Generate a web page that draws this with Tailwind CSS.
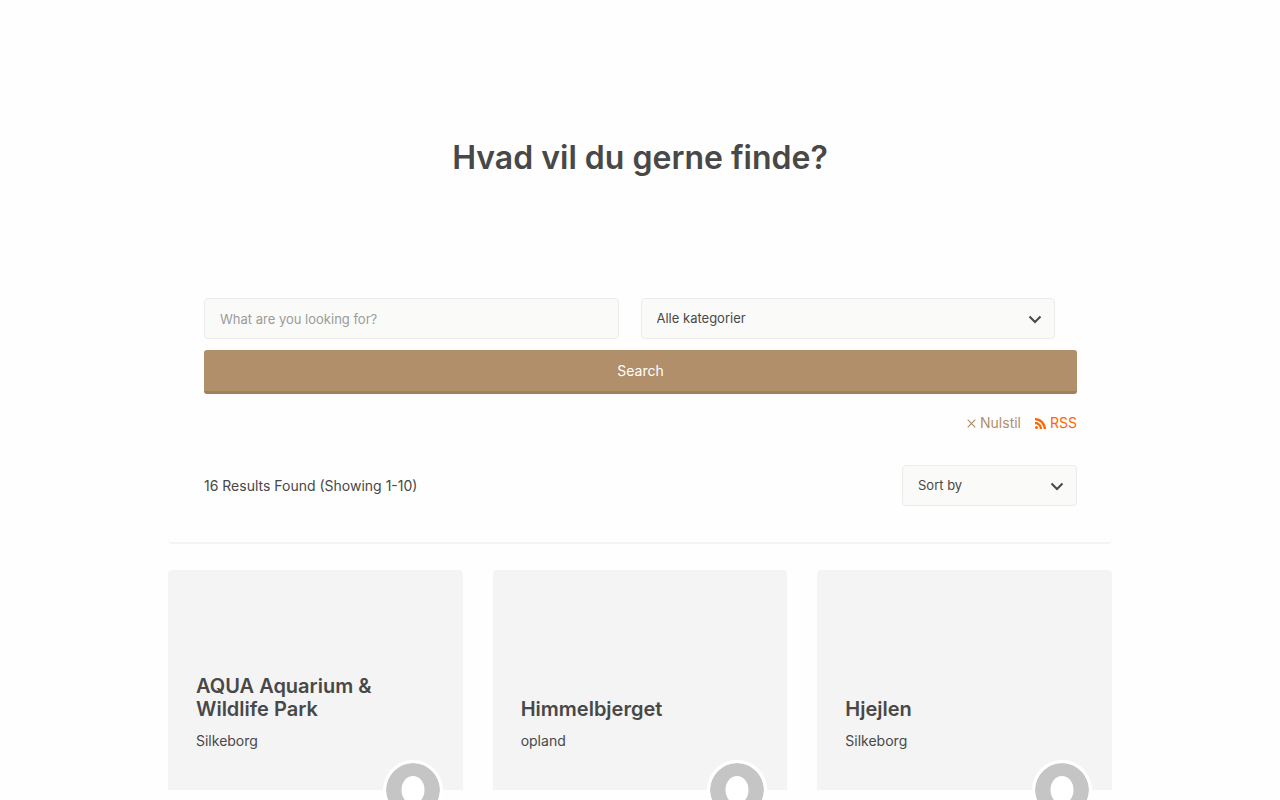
<!DOCTYPE html>
<html lang="da">
<head>
<meta charset="utf-8">
<meta name="viewport" content="width=device-width, initial-scale=1">
<title>Hvad vil du gerne finde?</title>
<script src="https://cdn.jsdelivr.net/npm/@tailwindcss/browser@4"></script>
</head>
<body class="min-h-screen bg-[#fefefe] font-['Inter',sans-serif] text-[#484848]">
<svg class="hidden" aria-hidden="true">
  <symbol id="chevron" viewBox="0 0 14 9"><path d="M1.5 1.500 7 7l5.500-5.500" fill="none" stroke="currentColor" stroke-width="2"/></symbol>
  <symbol id="person" viewBox="0 0 54 54"><circle cx="27" cy="27" r="27" fill="#c5c5c5"/><ellipse cx="27" cy="27" rx="11.500" ry="14" fill="#fff"/><path d="M22 37v5c-4 3-10 3-12 6a27 27 0 0 0 34 0c-2-3-8-3-12-6v-5z" fill="#fff"/></symbol>
</svg>
<main class="mx-auto max-w-[944px]">
  <h1 class="pt-[138px] text-center text-[32px] leading-10 font-semibold">Hvad vil du gerne finde?</h1>
  <section class="mt-[120px] rounded border-b-2 border-[#f4f4f4] pr-[35px] pb-9 pl-9">
    <form onsubmit="return false">
      <div class="grid grid-cols-2">
        <div class="pr-[22px]">
          <input type="text" aria-label="Search keywords" placeholder="What are you looking for?" class="block h-[41px] w-full rounded border border-[#ebebeb] bg-[#fafaf8] px-[15px] text-[13px] placeholder:text-[#9b9b9b]">
        </div>
        <div class="relative mr-[22px]">
          <select aria-label="Kategori" class="block h-[41px] w-full appearance-none rounded border border-[#ebebeb] bg-[#fafaf8] px-[15px] text-[13px]"><option>Alle kategorier</option></select>
          <svg class="pointer-events-none absolute top-[17px] right-[13px] h-[9px] w-[14px]"><use href="#chevron"/></svg>
        </div>
      </div>
      <button type="submit" class="mt-[11px] block h-11 w-full rounded-[3px] border-b-3 border-[#a17f5e] bg-[#b18f6a] pt-px text-sm text-white">Search</button>
    </form>
    <div class="mt-[19px] flex h-5 items-center justify-end gap-[14px] text-[14px] leading-5">
      <a href="#" class="flex items-center gap-1 text-[#b18f6a]">
        <svg class="size-[9px]" viewBox="0 0 9 9" fill="none" stroke="currentColor" stroke-width="1.200"><path d="m.7.7 7.600 7.600M8.300.7.7 8.300"/></svg>Nulstil</a>
      <a href="#" class="flex items-center gap-1 text-[#ff6600]">
        <svg class="size-[11px]" viewBox="0 0 11 11" fill="none" stroke="currentColor" stroke-width="2.300"><circle cx="1.500" cy="9.500" r="1.500" fill="currentColor" stroke="none"/><path d="M0 5a6 6 0 0 1 6 6M0 1.200A9.800 9.800 0 0 1 9.800 11"/></svg>RSS</a>
    </div>
    <div class="mt-8 flex items-center justify-between">
      <p class="text-[14px]">16 Results Found (Showing 1-10)</p>
      <div class="relative w-[175px]">
        <select aria-label="Sort by" class="block h-[41px] w-full appearance-none rounded border border-[#ebebeb] bg-[#fafaf8] px-[15px] text-[13px]"><option>Sort by</option></select>
        <svg class="pointer-events-none absolute top-[17px] right-[13px] h-[9px] w-[14px]"><use href="#chevron"/></svg>
      </div>
    </div>
  </section>
  <section class="mt-[26px] grid grid-cols-3 gap-[30px]">
    <article class="relative flex h-[220px] flex-col justify-end rounded-t bg-[#f4f4f4] px-7 pb-[39px]">
      <h2 class="text-[20px] leading-[23px] font-semibold"><a href="#">AQUA Aquarium &amp;<br>Wildlife Park</a></h2>
      <p class="mt-[10px] text-[14px] leading-5">Silkeborg</p>
      <svg class="absolute right-5 -bottom-[30px] size-[60px] rounded-full border-3 border-white bg-white"><use href="#person"/></svg>
    </article>
    <article class="relative flex h-[220px] flex-col justify-end rounded-t bg-[#f4f4f4] px-7 pb-[39px]">
      <h2 class="text-[20px] leading-[23px] font-semibold"><a href="#">Himmelbjerget</a></h2>
      <p class="mt-[10px] text-[14px] leading-5">opland</p>
      <svg class="absolute right-5 -bottom-[30px] size-[60px] rounded-full border-3 border-white bg-white"><use href="#person"/></svg>
    </article>
    <article class="relative flex h-[220px] flex-col justify-end rounded-t bg-[#f4f4f4] px-7 pb-[39px]">
      <h2 class="text-[20px] leading-[23px] font-semibold"><a href="#">Hjejlen</a></h2>
      <p class="mt-[10px] text-[14px] leading-5">Silkeborg</p>
      <svg class="absolute right-5 -bottom-[30px] size-[60px] rounded-full border-3 border-white bg-white"><use href="#person"/></svg>
    </article>
  </section>
</main>
</body>
</html>
